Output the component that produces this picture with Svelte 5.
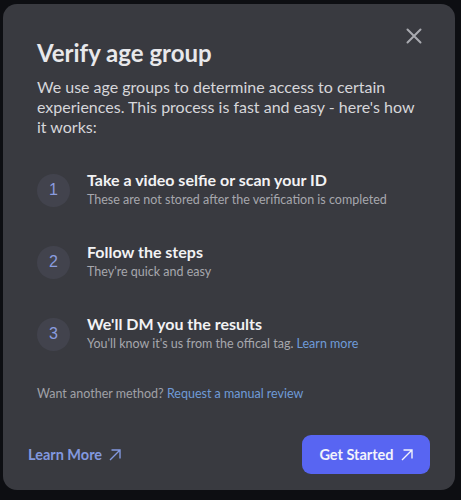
<script>
  const steps = [
    { n: 1, title: 'Take a video selfie or scan your ID', sub: 'These are not stored after the verification is completed' },
    { n: 2, title: 'Follow the steps', sub: "They're quick and easy" },
    { n: 3, title: "We'll DM you the results", sub: "You'll know it's us from the offical tag.", link: 'Learn more' }
  ];
</script>

<div class="page">
  <div class="card">
    <button class="close" aria-label="Close">
      <svg width="16" height="16" viewBox="0 0 16 16"><path d="M1.5 1.5 14.5 14.5M14.5 1.5 1.5 14.5" stroke="#a9aab0" stroke-width="2" fill="none" stroke-linecap="round"/></svg>
    </button>
    <div class="top">
      <h1>Verify age group</h1>
      <p class="intro">We use age groups to determine access to certain experiences. This process is fast and easy - here's how it works:</p>
      <div class="steps">
        {#each steps as s}
          <div class="step">
            <div class="num">{s.n}</div>
            <div class="txt">
              <div class="st">{s.title}</div>
              <div class="sub">{s.sub}{#if s.link}{' '}<span class="link">{s.link}</span>{/if}</div>
            </div>
          </div>
        {/each}
      </div>
      <p class="alt">Want another method? <span class="link">Request a manual review</span></p>
    </div>
    <div class="foot">
      <div class="more">Learn More
        <svg width="12" height="12" viewBox="0 0 12 12"><path d="M1 11 11 1M2.5 1H11V9.5" stroke="currentColor" stroke-width="1.4" fill="none"/></svg>
      </div>
      <div class="go">Get Started
        <svg width="12" height="12" viewBox="0 0 12 12"><path d="M1 11 11 1M2.5 1H11V9.5" stroke="currentColor" stroke-width="1.4" fill="none"/></svg>
      </div>
    </div>
  </div>
</div>

<style>
  :global(body) { margin: 0; background: #0d0e12; }
  .page { width: 461px; height: 500px; box-sizing: border-box; padding: 4px 6px 10px 3px; font-family: Lato, sans-serif; }
  .card { position: relative; height: 100%; box-sizing: border-box; background: #393a40; border-radius: 14px; display: flex; flex-direction: column; justify-content: space-between; padding: 0 25px 16px 25px; }
  .close { position: absolute; top: 24px; right: 33px; padding: 0; border: 0; background: none; display: flex; }
  .top { padding: 32px 9px 0; }
  h1 { margin: 0; font-size: 24px; line-height: 34px; font-weight: 700; color: #e8e8eb; }
  .intro { margin: 7px 0 0; font-size: 16px; line-height: 20px; color: #d6d6da; }
  .steps { margin-top: 33px; display: flex; flex-direction: column; gap: 32px; }
  .step { display: flex; align-items: center; gap: 17px; }
  .num { width: 33px; height: 33px; border-radius: 50%; background: #42434d; color: #8a9cdf; font-size: 16px; display: flex; align-items: center; justify-content: center; flex: none; font-family: "Liberation Sans", sans-serif; }
  .st { font-size: 16px; line-height: 20px; font-weight: 700; color: #f2f2f4; }
  .sub { font-size: 12.5px; line-height: 20px; color: #a6a7ad; }
  .link { color: #6f9bd8; }
  .alt { margin: 32px 0 0; font-size: 12.5px; line-height: 16px; color: #a0a1a7; }
  .foot { display: flex; justify-content: space-between; align-items: center; }
  .more { color: #8298df; font-size: 14.5px; font-weight: 700; display: flex; align-items: center; gap: 7px; }
  .go { width: 128px; height: 39px; background: #5865f2; border-radius: 9px; color: #f2f3fb; font-size: 14.5px; font-weight: 700; display: flex; align-items: center; justify-content: center; gap: 7px; }
</style>
